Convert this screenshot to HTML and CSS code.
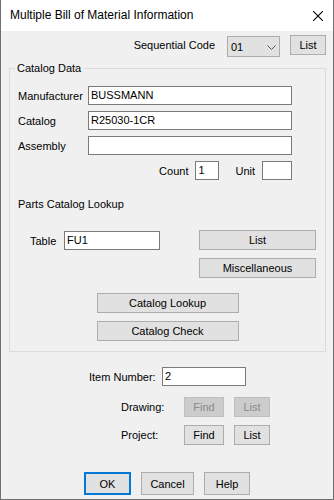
FILE: index.html
```html
<!DOCTYPE html>
<html lang="en">
<head>
    <meta charset="UTF-8">
    <title>Multiple Bill of Material Information</title>
    <link rel="stylesheet" href="styles.css">
</head>
<body>

    <div class="window">
        <!-- Title Bar -->
        <div class="titlebar">
            <span class="title">Multiple Bill of Material Information</span>
            <svg class="close" width="10" height="10" viewBox="0 0 10 10">
                <path d="M0 0 L10 10 M10 0 L0 10" stroke="#000" stroke-width="1.1" fill="none"/>
            </svg>
        </div>

        <div class="content">
            <!-- Sequential Code -->
            <div class="seq-row">
                <span class="seq-label">Sequential Code</span>
                <div class="combo">
                    <span>01</span>
                    <svg width="9" height="5" viewBox="0 0 9 5">
                        <polyline points="0.5,0.5 4.5,4.5 8.5,0.5" stroke="#555" stroke-width="1" fill="none"/>
                    </svg>
                </div>
                <button class="btn btn-seq">List</button>
            </div>

            <!-- Catalog Data -->
            <fieldset class="group">
                <legend>Catalog Data</legend>

                <div class="frow first">
                    <label class="flabel">Manufacturer</label>
                    <div class="textbox wide">BUSSMANN</div>
                </div>
                <div class="frow">
                    <label class="flabel">Catalog</label>
                    <div class="textbox wide">R25030-1CR</div>
                </div>
                <div class="frow">
                    <label class="flabel">Assembly</label>
                    <div class="textbox wide"></div>
                </div>
                <div class="count-row">
                    <span>Count</span>
                    <div class="textbox count-box">1</div>
                    <span class="unit-label">Unit</span>
                    <div class="textbox unit-box"></div>
                </div>

                <div class="subhead">Parts Catalog Lookup</div>

                <div class="table-row">
                    <div class="table-field">
                        <label class="table-label">Table</label>
                        <div class="textbox table-box">FU1</div>
                    </div>
                    <div class="side-buttons">
                        <button class="btn btn-side">List</button>
                        <button class="btn btn-side">Miscellaneous</button>
                    </div>
                </div>

                <div class="center-buttons">
                    <button class="btn btn-center">Catalog Lookup</button>
                    <button class="btn btn-center">Catalog Check</button>
                </div>
            </fieldset>

            <!-- Item Number -->
            <div class="item-row">
                <label class="item-label">Item Number:</label>
                <div class="textbox item-box">2</div>
            </div>

            <div class="find-row first">
                <span class="find-label">Drawing:</span>
                <button class="btn btn-find" disabled>Find</button>
                <button class="btn btn-small" disabled>List</button>
            </div>
            <div class="find-row">
                <span class="find-label">Project:</span>
                <button class="btn btn-find">Find</button>
                <button class="btn btn-small">List</button>
            </div>

            <!-- Dialog Buttons -->
            <div class="dialog-buttons">
                <button class="btn btn-ok">OK</button>
                <button class="btn btn-cancel">Cancel</button>
                <button class="btn btn-help">Help</button>
            </div>
        </div>
    </div>

</body>
</html>
```

FILE: styles.css
```css
/* Global Styles */
* {
    margin: 0;
    padding: 0;
    box-sizing: border-box;
}

body {
    font-family: "Liberation Sans", Arial, sans-serif;
    font-size: 11px;
    color: #000;
    background: #fff;
}

button {
    font: inherit;
    color: inherit;
}

/* Window */
.window {
    width: 334px;
    height: 500px;
    background: #f0f0f0;
    border: 1px solid #707070;
    border-top: none;
}

.titlebar {
    height: 31px;
    background: #fff;
    display: flex;
    align-items: center;
    justify-content: space-between;
    padding: 0 10px 0 9px;
}

.title {
    font-size: 12px;
    line-height: 31px;
}

.content {
    padding-top: 4px;
}

/* Buttons */
.btn {
    background: #e1e1e1;
    border: 1px solid #adadad;
    height: 20px;
    text-align: center;
    white-space: nowrap;
}

.btn:disabled {
    background: #cccccc;
    border-color: #bfbfbf;
    color: #8a8a8a;
}

/* Text boxes */
.textbox {
    height: 19px;
    background: #fff;
    border: 1px solid #7a7a7a;
    padding: 0 2px;
    line-height: 17px;
    white-space: nowrap;
}

/* Sequential Code */
.seq-row {
    display: flex;
    justify-content: flex-end;
    align-items: flex-start;
    height: 22px;
    padding-right: 7px;
}

.seq-label {
    line-height: 21px;
}

.combo {
    width: 53px;
    height: 21px;
    margin: 1px 10px 0 12px;
    background: #e1e1e1;
    border: 1px solid #adadad;
    display: flex;
    align-items: center;
    justify-content: space-between;
    padding: 1px 3px 0 3px;
}

.btn-seq {
    width: 36px;
}

/* Catalog Data group */
.group {
    margin: 5px 7px 0 8px;
    border: 1px solid #dcdcdc;
    padding: 0 0 10px 0;
    min-width: 0;
}

.group legend {
    margin-left: 5px;
    padding: 0 3px 0 2px;
    line-height: 13px;
}

.frow {
    display: flex;
    align-items: center;
    height: 19px;
    margin-top: 6px;
    padding-left: 8px;
}

.frow.first {
    margin-top: 11px;
}

.flabel {
    width: 70px;
}

.wide {
    width: 204px;
}

.count-row {
    display: flex;
    justify-content: flex-end;
    align-items: center;
    height: 19px;
    margin-top: 6px;
    padding-right: 33px;
}

.count-box {
    width: 24px;
    margin-left: 7px;
}

.unit-label {
    margin-left: 16px;
}

.unit-box {
    width: 30px;
    margin-left: 7px;
}

.subhead {
    margin-top: 18px;
    padding-left: 8px;
    line-height: 13px;
}

/* Parts Catalog Lookup */
.table-row {
    display: flex;
    align-items: flex-start;
    margin-top: 19px;
}

.table-field {
    display: flex;
    align-items: center;
    margin-top: 1px;
    padding-left: 20px;
}

.table-label {
    width: 34px;
}

.table-box {
    width: 96px;
}

.side-buttons {
    display: flex;
    flex-direction: column;
    gap: 8px;
    margin-left: 39px;
}

.btn-side {
    width: 117px;
}

.center-buttons {
    display: flex;
    flex-direction: column;
    align-items: center;
    gap: 8px;
    margin-top: 15px;
}

.btn-center {
    width: 142px;
}

/* Item Number */
.item-row {
    display: flex;
    align-items: center;
    height: 19px;
    margin-top: 15px;
    padding-left: 88px;
}

.item-label {
    width: 73px;
}

.item-box {
    width: 84px;
}

.find-row {
    display: flex;
    align-items: center;
    height: 20px;
    margin-top: 8px;
    padding-left: 120px;
}

.find-row.first {
    margin-top: 11px;
}

.find-label {
    width: 63px;
}

.btn-find {
    width: 40px;
    margin-right: 10px;
}

.btn-small {
    width: 36px;
}

/* Dialog Buttons */
.dialog-buttons {
    display: flex;
    justify-content: center;
    gap: 10px;
    margin-top: 27px;
}

.dialog-buttons .btn {
    height: 23px;
}

.btn-ok {
    width: 47px;
    border: 2px solid #0078d7;
}

.btn-cancel {
    width: 53px;
}

.btn-help {
    width: 46px;
}
```
